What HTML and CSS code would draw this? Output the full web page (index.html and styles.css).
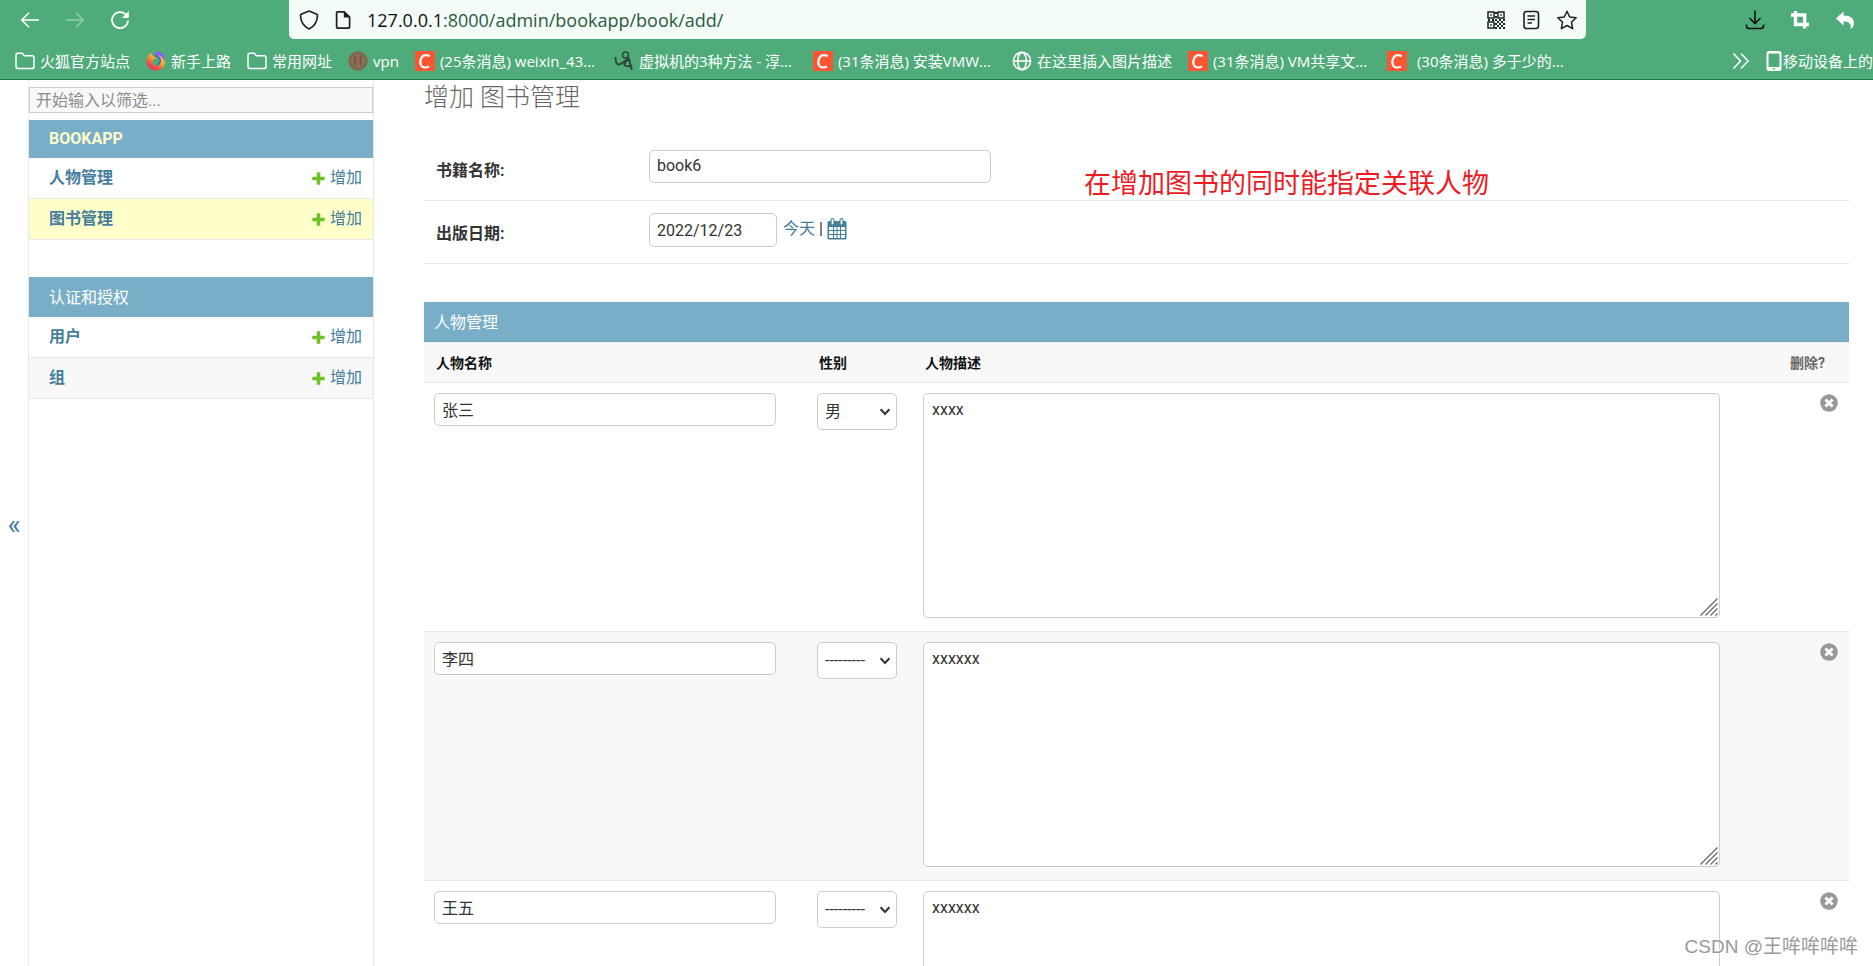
FILE: index.html
```html
<!DOCTYPE html>
<html lang="zh-CN">
<head>
<meta charset="utf-8">
<title>增加 图书管理</title>
<link rel="stylesheet" href="styles.css">
</head>
<body>
<svg class="defs" width="0" height="0" aria-hidden="true">
  <symbol id="i-folder" viewBox="0 0 20 20"><path d="M1 4.2Q1 2.2 3 2.2H7.2L9.4 4.8H17Q19 4.8 19 6.8V15.4Q19 17.6 17 17.6H3Q1 17.6 1 15.4Z" fill="none" stroke="#fff" stroke-width="1.5" stroke-linejoin="round"/></symbol>
  <symbol id="i-csdn" viewBox="0 0 20 20"><path d="M0 0H20V20H0Z" fill="#fc5531"/><path d="M14.6 5.2C12 3.6 8.8 3.9 7.2 5.8C5 8.4 4.6 12.6 6.5 14.9C8 16.8 11.4 16.9 14 15.5" fill="none" stroke="#fff" stroke-width="2.3"/></symbol>
  <symbol id="i-plus" viewBox="0 0 13 13"><path d="M4.7 0.8Q4.7 0.3 5.2 0.3H7.8Q8.3 0.3 8.3 0.8V4.7H12.2Q12.7 4.7 12.7 5.2V7.8Q12.7 8.3 12.2 8.3H8.3V12.2Q8.3 12.7 7.8 12.7H5.2Q4.7 12.7 4.7 12.2V8.3H0.8Q0.3 8.3 0.3 7.8V5.2Q0.3 4.7 0.8 4.7H4.7Z" fill="#70bf2b"/></symbol>
  <symbol id="i-remove" viewBox="0 0 18 18"><circle cx="9" cy="9" r="8.8" fill="#999"/><path d="M6.500 6.500L11.500 11.500M11.500 6.500L6.500 11.500" stroke="#fff" stroke-width="3" stroke-linecap="square"/></symbol>
  <symbol id="i-caret" viewBox="0 0 12 8"><path d="M1.6 1.2L6 6L10.4 1.2" fill="none" stroke="#333" stroke-width="2"/></symbol>
  <symbol id="i-grip" viewBox="0 0 18 18"><path d="M0.5 17.5L17.5 0.5M5.5 17.5L17.5 5.5M10.5 17.5L17.5 10.5M15.5 17.5L17.5 15.5" stroke="#666" stroke-width="1.3"/></symbol>
</svg>

<header class="browser">
  <div class="toolbar">
    <div class="nav-buttons">
      <button class="icon-button" aria-label="后退"><svg width="20" height="20" viewBox="0 0 20 20"><path d="M19 10H2M9 2.8L1.8 10L9 17.2" fill="none" stroke="#fff" stroke-width="1.6"/></svg></button>
      <button class="icon-button icon-button-dim" aria-label="前进"><svg width="20" height="20" viewBox="0 0 20 20"><path d="M1 10H18M11 2.8L18.2 10L11 17.2" fill="none" stroke="#fff" stroke-width="1.6"/></svg></button>
      <button class="icon-button" aria-label="刷新"><svg width="20" height="20" viewBox="0 0 20 20"><path d="M16.6 5.6A8 8 0 1 0 18 10.5" fill="none" stroke="#fff" stroke-width="1.7"/><path d="M18.8 1V8H11.8Z" fill="#fff"/></svg></button>
    </div>
    <div class="address">
      <svg width="20" height="20" viewBox="0 0 20 20"><path d="M10 1L17.8 4.2Q18.6 4.6 18.5 5.6C18.2 11.6 15.6 16.4 10 19C4.400 16.400 1.800 11.600 1.500 5.600Q1.400 4.600 2.200 4.200Z" fill="none" stroke="#15241c" stroke-width="1.6" stroke-linejoin="round"/></svg>
      <svg width="18" height="20" viewBox="0 0 18 20"><path d="M3.600 1.800H10.200L15.600 7.200V16.400Q15.600 18.200 13.800 18.200H4.400Q2.600 18.200 2.600 16.400V2.800Q2.600 1.800 3.600 1.800Z" fill="none" stroke="#15241c" stroke-width="1.700"/><path d="M9.800 1.600V7.600H15.800Z" fill="#15241c"/></svg>
      <div class="url"><span class="url-host">127.0.0.1</span>:8000/admin/bookapp/book/add/</div>
      <button class="icon-button" aria-label="二维码"><svg width="20" height="20" viewBox="0 0 20 20" fill="none" stroke="#15241c"><path d="M2 2H8V8H2ZM12 2H18V8H12ZM2 12H8V18H2Z" stroke-width="1.500"/><path d="M4.200 4.200H5.800V5.800H4.200ZM14.200 4.200H15.800V5.800H14.200ZM4.200 14.200H5.800V15.800H4.200ZM9 2H11V4H9ZM9 6H11V8H9ZM2 9H4V11H2ZM6 9H8V11H6ZM9 9H11V11H9ZM13 9H15V11H13ZM17 9H19V11H17ZM11 11H13V13H11ZM15 11H17V13H15ZM9 13H11V15H9ZM13 13H15V15H13ZM17 13H19V15H17ZM11 15H13V17H11ZM15 15H17V17H15ZM9 17H11V19H9ZM13 17H15V19H13ZM17 17H19V19H17Z" fill="#15241c" stroke="none"/></svg></button>
      <button class="icon-button" aria-label="阅读视图"><svg width="20" height="20" viewBox="0 0 20 20"><rect x="3" y="1.500" width="14.500" height="17" rx="2.500" fill="none" stroke="#15241c" stroke-width="1.600"/><path d="M6.500 6H14M6.500 9.500H14M6.500 13H11" stroke="#15241c" stroke-width="1.500"/></svg></button>
      <button class="icon-button" aria-label="收藏"><svg width="22" height="20" viewBox="0 0 22 20"><path d="M11 1.200L13.700 7L20.200 7.800L15.400 12.200L16.700 18.700L11 15.500L5.300 18.700L6.600 12.200L1.800 7.800L8.300 7Z" fill="none" stroke="#15241c" stroke-width="1.500" stroke-linejoin="round"/></svg></button>
    </div>
    <div class="tools">
      <button class="icon-button" aria-label="下载"><svg width="20" height="20" viewBox="0 0 20 20"><path d="M10 0.500V13M4.500 8L10 13.500L15.500 8M1.500 14.500V16Q1.500 18.500 4 18.500H16Q18.500 18.500 18.500 16V14.500" fill="none" stroke="#111" stroke-width="1.600"/></svg></button>
      <button class="icon-button" aria-label="截图"><svg width="20" height="20" viewBox="0 0 20 20"><path d="M5.500 1V14.500H19M1 5H14.700V18.500" fill="none" stroke="#fff" stroke-width="3.400"/></svg></button>
      <button class="icon-button" aria-label="撤销"><svg width="20" height="20" viewBox="0 0 20 20"><path d="M8.500 1.500V5.500C15.500 5.500 19 8.500 19 13C19 15.500 18 17.500 15.500 19C16.500 14 14.500 11.500 8.500 11.500V15.500L1 8.500Z" fill="#fff"/></svg></button>
    </div>
  </div>
  <nav class="bookmarks">
    <a class="bookmark" href="#"><svg width="20" height="20"><use href="#i-folder"/></svg>火狐官方站点</a>
    <a class="bookmark" href="#"><svg width="20" height="20" viewBox="0 0 20 20"><defs><linearGradient id="ff" x1="0.900" y1="0" x2="0.200" y2="1"><stop offset="0" stop-color="#ffe14a"/><stop offset="0.450" stop-color="#ffa033"/><stop offset="0.750" stop-color="#f8484f"/><stop offset="1" stop-color="#e0287a"/></linearGradient></defs><path d="M2 5Q3.500 2.500 5 2Q5 4 7 4.500L10 7A4 4 0 1 0 14.500 10Q14.500 5 10 3Q15.500 1.500 18 6Q21 14 15 18Q9.500 21.500 4 17.500Q-0.500 13.500 1 7.500Z" fill="url(#ff)"/><path d="M8.500 1.500Q13 -0.500 16.500 3Q19.500 7 18.500 11Q17 6.500 14 5Q11.500 3.500 8.500 3Z" fill="#9059ff"/><path d="M9 3.500Q15.500 5 15 10.500Q14 14.500 10 14.500Q15 10.500 12.500 7Q11 5 8 5.500Z" fill="#4967b8"/></svg>新手上路</a>
    <a class="bookmark" href="#"><svg width="20" height="20"><use href="#i-folder"/></svg>常用网址</a>
    <a class="bookmark" href="#"><svg width="20" height="20" viewBox="0 0 20 20" fill="none" stroke="#8b5a4b"><circle cx="10" cy="10" r="9.200" fill="#7c7a5c"/><circle cx="10" cy="10" r="7.700" stroke-dasharray="1.500 1" stroke-width="1.800"/><path d="M5.500 6.500H9M5.500 9H9M5.500 12H9M7 5V15M10.500 6.500H14.500M10.500 9H14.500M10.500 12H14.500M12.500 5V15" stroke="#9c4037" stroke-width="1.100"/></svg>vpn</a>
    <a class="bookmark" href="#"><svg width="20" height="20"><use href="#i-csdn"/></svg><span class="bookmark-long">(25条消息) weixin_43...</span></a>
    <a class="bookmark" href="#"><svg width="20" height="20" viewBox="0 0 20 20" fill="none" stroke="#30463a"><circle cx="11.500" cy="4" r="3" stroke-width="1.500"/><path d="M1.500 6Q1.500 13 4.500 13.500Q8 13 13.500 8M15 7Q10 12 10.500 14.500Q14 16 18 14.500M14.800 7Q16 13 18 19" stroke-width="1.900"/></svg><span class="bookmark-long">虚拟机的3种方法 - 淳...</span></a>
    <a class="bookmark" href="#"><svg width="20" height="20"><use href="#i-csdn"/></svg><span class="bookmark-long">(31条消息) 安装VMW...</span></a>
    <a class="bookmark" href="#"><svg width="20" height="20" viewBox="0 0 20 20" fill="none" stroke="#fff" stroke-width="1.600"><circle cx="10" cy="10" r="8.600"/><ellipse cx="10" cy="10" rx="4.300" ry="8.600"/><path d="M1.500 10H18.500"/></svg>在这里插入图片描述</a>
    <a class="bookmark" href="#"><svg width="20" height="20"><use href="#i-csdn"/></svg><span class="bookmark-long">(31条消息) VM共享文...</span></a>
    <a class="bookmark bookmark-spaced" href="#"><svg width="20" height="20"><use href="#i-csdn"/></svg><span class="bookmark-long">(30条消息) 多于少的...</span></a>
    <button class="icon-button bookmarks-more" aria-label="更多书签"><svg width="18" height="18" viewBox="0 0 18 18"><path d="M1.500 1.500L8.500 9L1.500 16.500M9 1.500L16 9L9 16.500" fill="none" stroke="#fff" stroke-width="1.600"/></svg></button>
    <a class="bookmark bookmark-mobile" href="#"><svg width="16" height="20" viewBox="0 0 16 20"><path d="M3 0H13Q15.500 0 15.500 2.500V17.500Q15.500 20 13 20H3Q0.500 20 0.500 17.500V2.500Q0.500 0 3 0ZM2.500 2.500V16H13.500V2.500ZM6.800 17.200V18.600H9.200V17.200Z" fill="#fff" fill-rule="evenodd"/></svg>移动设备上的</a>
  </nav>
</header>

<div class="layout">
  <button class="sidebar-toggle" aria-label="切换导航栏">«</button>
  <nav class="sidebar">
    <input class="filter" type="search" placeholder="开始输入以筛选..." aria-label="筛选">
    <section class="app">
      <h2 class="caption"><a class="app-current" href="#">BOOKAPP</a></h2>
      <div class="model"><a class="model-name" href="#">人物管理</a><a class="add" href="#"><svg width="13" height="13"><use href="#i-plus"/></svg>增加</a></div>
      <div class="model model-current"><a class="model-name" href="#">图书管理</a><a class="add" href="#"><svg width="13" height="13"><use href="#i-plus"/></svg>增加</a></div>
    </section>
    <section class="app">
      <h2 class="caption caption-cjk"><a href="#">认证和授权</a></h2>
      <div class="model"><a class="model-name" href="#">用户</a><a class="add" href="#"><svg width="13" height="13"><use href="#i-plus"/></svg>增加</a></div>
      <div class="model model-alt"><a class="model-name" href="#">组</a><a class="add" href="#"><svg width="13" height="13"><use href="#i-plus"/></svg>增加</a></div>
    </section>
  </nav>

  <main class="content">
    <h1 class="title">增加 图书管理</h1>
    <p class="note">在增加图书的同时能指定关联人物</p>
    <form>
      <div class="form-row">
        <label class="form-label" for="name">书籍名称:</label>
        <input class="field field-name" id="name" type="text" value="book6">
      </div>
      <div class="form-row form-row-date">
        <label class="form-label" for="date">出版日期:</label>
        <input class="field field-date" id="date" type="text" value="2022/12/23">
        <span class="shortcuts"><a href="#">今天</a><span>|</span><a href="#" aria-label="选择日期"><svg width="20" height="22" viewBox="0 0 20 22"><path d="M2 3H18Q19.500 3 19.500 4.500V20Q19.500 21.500 18 21.500H2Q0.500 21.500 0.500 20V4.500Q0.500 3 2 3Z" fill="#447e9b"/><path d="M2 9H6V12H2ZM7 9H9.500V12H7ZM10.500 9H13V12H10.500ZM14 9H18V12H14ZM2 13H6V16H2ZM7 13H9.500V16H7ZM10.500 13H13V16H10.500ZM14 13H18V16H14ZM2 17H6V20H2ZM7 17H9.500V20H7ZM10.500 17H13V20H10.500ZM14 17H18V20H14Z" fill="#fff"/><path d="M5.500 2V5.500M14.500 2V5.500" stroke="#447e9b" stroke-width="4" stroke-linecap="round"/><path d="M5.500 2V5.500M14.500 2V5.500" stroke="#fff" stroke-width="1.800" stroke-linecap="round"/></svg></a></span>
      </div>

      <section class="inline-group">
        <h2 class="inline-title">人物管理</h2>
        <table class="people">
          <colgroup><col class="col-name"><col class="col-gender"><col><col class="col-delete"></colgroup>
          <thead>
            <tr><th>人物名称</th><th>性别</th><th>人物描述</th><th class="th-delete">删除?</th></tr>
          </thead>
          <tbody>
            <tr>
              <td><input class="field field-name" type="text" value="张三" aria-label="人物名称"></td>
              <td><div class="select-box"><select class="field select" aria-label="性别"><option>---------</option><option selected>男</option><option>女</option></select><svg class="caret" width="12" height="8"><use href="#i-caret"/></svg></div></td>
              <td><div class="text-box"><textarea class="field text" aria-label="人物描述">xxxx</textarea><svg class="grip" width="18" height="18"><use href="#i-grip"/></svg></div></td>
              <td class="cell-delete"><button type="button" class="icon-button" aria-label="删除"><svg width="18" height="18"><use href="#i-remove"/></svg></button></td>
            </tr>
            <tr>
              <td><input class="field field-name" type="text" value="李四" aria-label="人物名称"></td>
              <td><div class="select-box"><select class="field select" aria-label="性别"><option>---------</option><option>男</option><option>女</option></select><svg class="caret" width="12" height="8"><use href="#i-caret"/></svg></div></td>
              <td><div class="text-box"><textarea class="field text" aria-label="人物描述">xxxxxx</textarea><svg class="grip" width="18" height="18"><use href="#i-grip"/></svg></div></td>
              <td class="cell-delete"><button type="button" class="icon-button" aria-label="删除"><svg width="18" height="18"><use href="#i-remove"/></svg></button></td>
            </tr>
            <tr>
              <td><input class="field field-name" type="text" value="王五" aria-label="人物名称"></td>
              <td><div class="select-box"><select class="field select" aria-label="性别"><option>---------</option><option>男</option><option>女</option></select><svg class="caret" width="12" height="8"><use href="#i-caret"/></svg></div></td>
              <td><div class="text-box"><textarea class="field text" aria-label="人物描述">xxxxxx</textarea><svg class="grip" width="18" height="18"><use href="#i-grip"/></svg></div></td>
              <td class="cell-delete"><button type="button" class="icon-button" aria-label="删除"><svg width="18" height="18"><use href="#i-remove"/></svg></button></td>
            </tr>
          </tbody>
        </table>
      </section>
    </form>
  </main>
</div>
<div class="watermark">CSDN @王哞哞哞哞</div>
</body>
</html>
```
FILE: styles.css
```css
* { box-sizing: border-box; }

body {
  margin: 0;
  height: 100vh;
  overflow: hidden;
  display: flex;
  flex-direction: column;
  background: #fff;
  color: #333;
  font-family: Roboto, "Noto Sans CJK SC", sans-serif;
  font-size: 16px;
  line-height: 24px;
}

a { color: #447e9b; text-decoration: none; }
svg { display: block; flex: none; }
.defs { position: absolute; }

.icon-button {
  display: block;
  flex: none;
  padding: 0;
  border: 0;
  background: none;
}
.icon-button-dim { opacity: 0.4; }

/* Browser chrome */
.browser {
  flex: none;
  background: #4fac7a;
  border-bottom: 1px solid #0f8040;
  font-family: "Open Sans", "Noto Sans CJK SC", sans-serif;
}
.toolbar {
  display: grid;
  grid-template-columns: 289px 1fr 287px;
  height: 39px;
}
.nav-buttons, .tools {
  display: flex;
  align-items: center;
  gap: 25px;
  padding: 0 20px;
}
.tools { justify-content: flex-end; padding: 0 18px; }
.address {
  display: flex;
  align-items: center;
  gap: 15px;
  padding: 0 8px 0 10px;
  background: #f4fcf7;
  border-radius: 0 0 5px 5px;
}
.url {
  flex: 1;
  color: #2b5a40;
  font-size: 18px;
}
.url-host { color: #111; }

.bookmarks {
  display: flex;
  align-items: center;
  gap: 16px;
  height: 40px;
  padding: 3px 0 0 15px;
  overflow: hidden;
}
.bookmark {
  display: flex;
  align-items: center;
  gap: 5px;
  flex: none;
  color: #fff;
  font-size: 15px;
  white-space: nowrap;
}
.bookmark-long { width: 158px; }
.bookmark-spaced { gap: 10px; }
.bookmarks-more { margin-left: auto; }
.bookmark-mobile { gap: 1px; }

/* Page */
.layout {
  flex: 1;
  min-height: 0;
  display: flex;
  overflow: hidden;
}
.sidebar-toggle {
  flex: none;
  width: 28px;
  padding: 4px 0 0;
  border: 0;
  background: none;
  color: #447e9b;
  font: 28px/32px Roboto, sans-serif;
}
.sidebar {
  flex: none;
  width: 346px;
  padding-top: 7px;
  border: 1px solid #e8e8e8;
  border-width: 0 1px;
}
.filter {
  display: block;
  width: 100%;
  height: 26px;
  margin-bottom: 7px;
  padding: 0 6px;
  border: 1px solid #ccc;
  background: #f8f8f8;
  font: inherit;
}
.filter::placeholder { color: #8c8c8c; }
.app { margin-bottom: 37px; }
.caption {
  margin: 0;
  padding: 7px 20px;
  background: #79aec8;
  font-size: 16px;
  font-weight: 400;
}
.caption a { color: #fff; }
.caption .app-current { color: #ffc; font-weight: 700; }
.caption-cjk { padding: 9px 20px 7px; }
.model {
  display: flex;
  justify-content: space-between;
  padding: 8px 11px 8px 20px;
  border-bottom: 1px solid #e8e8e8;
}
.model-current { background: #ffc; }
.model-alt { background: #f8f8f8; }
.model-name { font-weight: 700; }
.add { display: flex; align-items: center; gap: 5px; }

.content {
  position: relative;
  flex: 1;
  min-width: 0;
  padding: 2px 24px 0 50px;
}
.title {
  margin: 0 0 25px;
  color: #666;
  font-size: 25px;
  font-weight: 300;
  line-height: 32px;
}
/* Annotation drawn over the form */
.note {
  position: absolute;
  top: 86px;
  left: 710px;
  margin: 0;
  color: #ed1c24;
  font-size: 27px;
  line-height: 36px;
}

.form-row {
  display: flex;
  align-items: flex-start;
  padding: 11px 12px 17px;
  border-bottom: 1px solid #e8e8e8;
}
.form-row-date { padding: 12px 12px 16px; }
.form-label {
  flex: none;
  width: 213px;
  padding-top: 9px;
  font-weight: 700;
}
.field {
  display: block;
  border: 1px solid #ccc;
  border-radius: 5px;
  background: #fff;
  color: #333;
  font: inherit;
  padding: 0 7px;
}
.field-name { width: 342px; height: 33px; padding-bottom: 2px; }
.field-date { width: 128px; height: 34px; }
.shortcuts {
  display: flex;
  align-items: center;
  gap: 4px;
  padding: 4px 0 0 6px;
}

.inline-group { margin-top: 38px; }
.inline-title {
  margin: 0;
  padding: 9px 10px 7px;
  background: #79aec8;
  color: #fff;
  font-size: 16px;
  font-weight: 400;
}
.people {
  width: 100%;
  table-layout: fixed;
  border-collapse: separate;
  border-spacing: 0;
}
.col-name { width: 383px; }
.col-gender { width: 106px; }
.col-delete { width: 119px; }
.people th {
  padding: 8px 12px 7px;
  border: 1px solid #e8e8e8;
  border-width: 1px 0;
  background: #f8f8f8;
  color: #111;
  font-size: 14px;
  text-align: left;
}
.people .th-delete { padding-right: 24px; color: #666; text-align: right; }
.people td {
  padding: 10px 10px 13px;
  border-bottom: 1px solid #e8e8e8;
  vertical-align: top;
}
.people tbody tr:nth-child(even) { background: #f8f8f8; }
.people .cell-delete { padding-right: 11px; }
.cell-delete .icon-button { margin: 1px 0 0 auto; }

.select-box, .text-box { display: grid; }
.select-box { width: 80px; }
.select-box > *, .text-box > * { grid-area: 1 / 1; }
.select { width: 100%; height: 37px; appearance: none; }
.caret {
  align-self: center;
  justify-self: end;
  margin-right: 6px;
  pointer-events: none;
}
.text {
  width: 100%;
  height: 225px;
  padding: 4px 8px;
  resize: none;
}
.grip {
  align-self: end;
  justify-self: end;
  margin: 0 2px 2px 0;
  pointer-events: none;
}

.watermark {
  position: absolute;
  right: 15px;
  bottom: 5px;
  color: #999;
  font: 19px/28px "Liberation Sans", "Noto Sans CJK SC", sans-serif;
  text-shadow: -1px -1px 0 #fff;
}
```
